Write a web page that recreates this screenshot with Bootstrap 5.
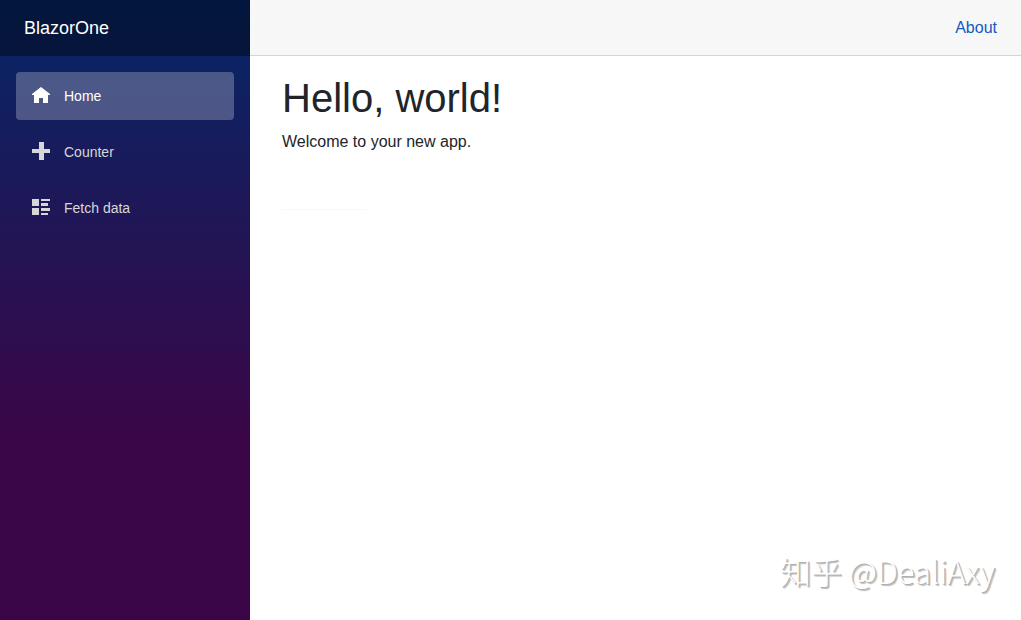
<!DOCTYPE html>
<html lang="en">
<head>
<meta charset="utf-8">
<meta name="viewport" content="width=device-width, initial-scale=1">
<title>BlazorOne</title>
<link href="https://cdn.jsdelivr.net/npm/bootstrap@5.3.0/dist/css/bootstrap.min.css" rel="stylesheet">
<style>
  body { font-family: "Liberation Sans", Arial, sans-serif; }
  .sidebar { width: 250px; background: linear-gradient(180deg, #052767 0%, #3a0647 70%); }
  .top-row { height: 56px; }
  .sidebar .top-row { background: rgba(0, 0, 0, .4); }
  .site-title { font-size: 18px; }
  main .top-row { background: #f7f7f7; border-bottom: 1px solid #d6d5d5; }
  .about-link { color: #1459bf; }
  .side-nav .nav-link { height: 48px; gap: 14px; font-size: 14px; color: #d7d7d7; border-radius: 4px; }
  .side-nav .nav-link.active { background: rgba(255, 255, 255, .25); color: #fff; }
  .side-nav .nav-link:hover { color: #fff; }
  .nav-icon { width: 18px; height: 18px; margin-bottom: 3px; }
  .page-body { padding: 18px 24px 0 32px; }
  .page-body h1 { font-size: 40px; }
  .faint-rule { width: 84px; margin-top: 55px; color: #e4e4e4; }
  .signature { right: 26px; bottom: 26px; font: 300 31px/46px "Noto Sans CJK SC", sans-serif; color: #fff; text-shadow: 1px 1px 0 #b0b0b0, 2px 2px 1px #bbb; }
</style>
</head>
<body>
<div class="d-flex min-vh-100 position-relative">
  <div class="sidebar flex-shrink-0">
    <div class="top-row d-flex align-items-center px-4">
      <a class="site-title text-white text-decoration-none" href="#">BlazorOne</a>
    </div>
    <nav class="side-nav nav flex-column gap-2 p-3" aria-label="Main">
      <a class="nav-link active d-flex align-items-center px-3 py-0" href="#" aria-current="page">
        <svg class="nav-icon flex-shrink-0" viewBox="0 0 18 18" fill="currentColor" aria-hidden="true"><path d="M9 1 0 8v1h2v8h5v-5h4v5h5V9h2V8z"/></svg>Home
      </a>
      <a class="nav-link d-flex align-items-center px-3 py-0" href="#counter">
        <svg class="nav-icon flex-shrink-0" viewBox="0 0 18 18" fill="currentColor" aria-hidden="true"><path d="M7 0h5v7h6v4h-6v7H7v-7H0V7h7z"/></svg>Counter
      </a>
      <a class="nav-link d-flex align-items-center px-3 py-0" href="#fetchdata">
        <svg class="nav-icon flex-shrink-0" viewBox="0 0 18 18" fill="currentColor" aria-hidden="true"><path d="M0 1h7v7H0zM0 10h7v7H0zM9 1h9v2H9zM9 5h7v3H9zM9 10h9v3H9zM9 15h7v2H9z"/></svg>Fetch data
      </a>
    </nav>
  </div>
  <main class="flex-grow-1">
    <div class="top-row d-flex align-items-center justify-content-end px-4">
      <a class="about-link text-decoration-none" href="#about">About</a>
    </div>
    <article class="page-body">
      <h1 class="fw-normal mb-2">Hello, world!</h1>
      <p>Welcome to your new app.</p>
      <hr class="faint-rule">
    </article>
  </main>
  <div class="signature position-absolute">知乎 @DealiAxy</div>
</div>
<script src="https://cdn.jsdelivr.net/npm/bootstrap@5.3.0/dist/js/bootstrap.bundle.min.js"></script>
</body>
</html>
